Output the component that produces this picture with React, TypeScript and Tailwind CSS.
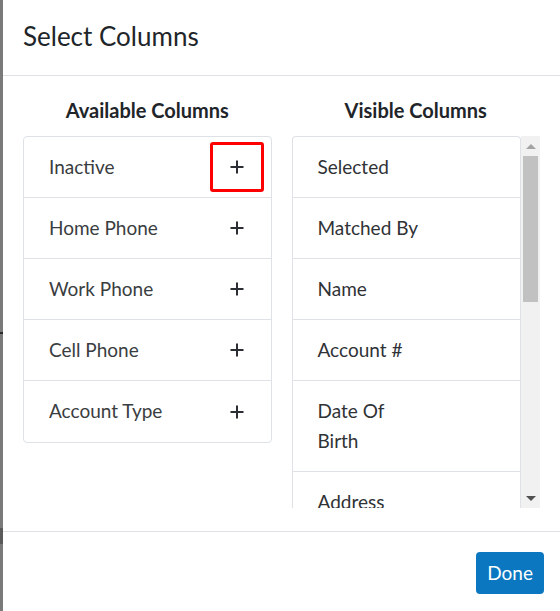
import React from "react";

const available = ["Inactive", "Home Phone", "Work Phone", "Cell Phone", "Account Type"];
const visible = ["Selected", "Matched By", "Name", "Account #", "Date Of Birth", "Address"];

const PlusIcon = () => (
  <svg width="16" height="16" viewBox="0 0 16 16" fill="none">
    <path d="M8 1.5v13M1.5 8h13" stroke="#2b2f33" strokeWidth="2" />
  </svg>
);

export default function App() {
  return (
    <div
      className="flex h-[611px] w-[560px] overflow-hidden bg-white"
      style={{ fontFamily: "Lato, 'Noto Sans', sans-serif" }}
    >
      {/* backdrop strip */}
      <div className="flex w-[3px] shrink-0 flex-col bg-[#7a7a7a]">
        <div className="h-[332px]" />
        <div className="h-[2px] bg-[#2a2a2a]" />
        <div className="h-[194px]" />
        <div className="h-[16px] bg-[#5a5a5a]" />
      </div>

      <div className="flex min-w-0 flex-1 flex-col text-[#212529]">
        {/* header */}
        <div className="flex h-[76px] items-center border-b border-[#dee2e6] px-5 pb-[4px]">
          <h2 className="text-[26px] leading-none">Select Columns</h2>
        </div>

        {/* body */}
        <div className="grid grid-cols-2 gap-5 px-5 pt-[22px]">
          <div className="flex flex-col">
            <div className="mb-[13px] text-center text-[20px] font-bold leading-[25px]">
              Available Columns
            </div>
            <div className="rounded border border-[#dee2e6]">
              {available.map((name, i) => (
                <div
                  key={name}
                  className="flex h-[61px] items-center justify-between border-[#dee2e6] pl-[25px] pr-[7px] [&:not(:last-child)]:border-b"
                >
                  <span className="text-[19px] text-[#3a3d40]">{name}</span>
                  <button
                    className={`flex h-[50px] w-[54px] items-center justify-center rounded-[3px] ${
                      i === 0 ? "border-[3px] border-[#ff0000]" : ""
                    }`}
                  >
                    <PlusIcon />
                  </button>
                </div>
              ))}
            </div>
          </div>

          <div className="flex flex-col">
            <div className="mb-[13px] text-center text-[20px] font-bold leading-[25px]">
              Visible Columns
            </div>
            <div className="flex h-[372px] overflow-hidden">
              <div className="min-w-0 flex-1 overflow-hidden rounded-t border border-b-0 border-[#dee2e6]">
                {visible.map((name) => (
                  <div
                    key={name}
                    className="border-b border-[#dee2e6] py-[15px] pl-[25px]"
                  >
                    <span className="block w-[108px] text-[19px] leading-[30px] text-[#2f3236]">
                      {name}
                    </span>
                  </div>
                ))}
              </div>
              {/* scrollbar */}
              <div className="flex w-[19px] shrink-0 flex-col bg-[#f1f1f1]">
                <div className="flex h-[20px] items-center justify-center">
                  <div className="h-0 w-0 border-x-[5px] border-b-[5px] border-x-transparent border-b-[#a3a3a3]" />
                </div>
                <div className="mx-[2px] h-[146px] bg-[#c1c1c1]" />
                <div className="flex-1" />
                <div className="flex h-[20px] items-center justify-center">
                  <div className="h-0 w-0 border-x-[5px] border-t-[5px] border-x-transparent border-t-[#505050]" />
                </div>
              </div>
            </div>
          </div>
        </div>

        {/* footer */}
        <div className="mt-[23px] flex justify-end border-t border-[#dee2e6] px-[16px] pt-[20px]">
          <button className="h-[42px] rounded bg-[#0b77c1] px-[11px] text-[19px] text-white">
            Done
          </button>
        </div>
      </div>
    </div>
  );
}
